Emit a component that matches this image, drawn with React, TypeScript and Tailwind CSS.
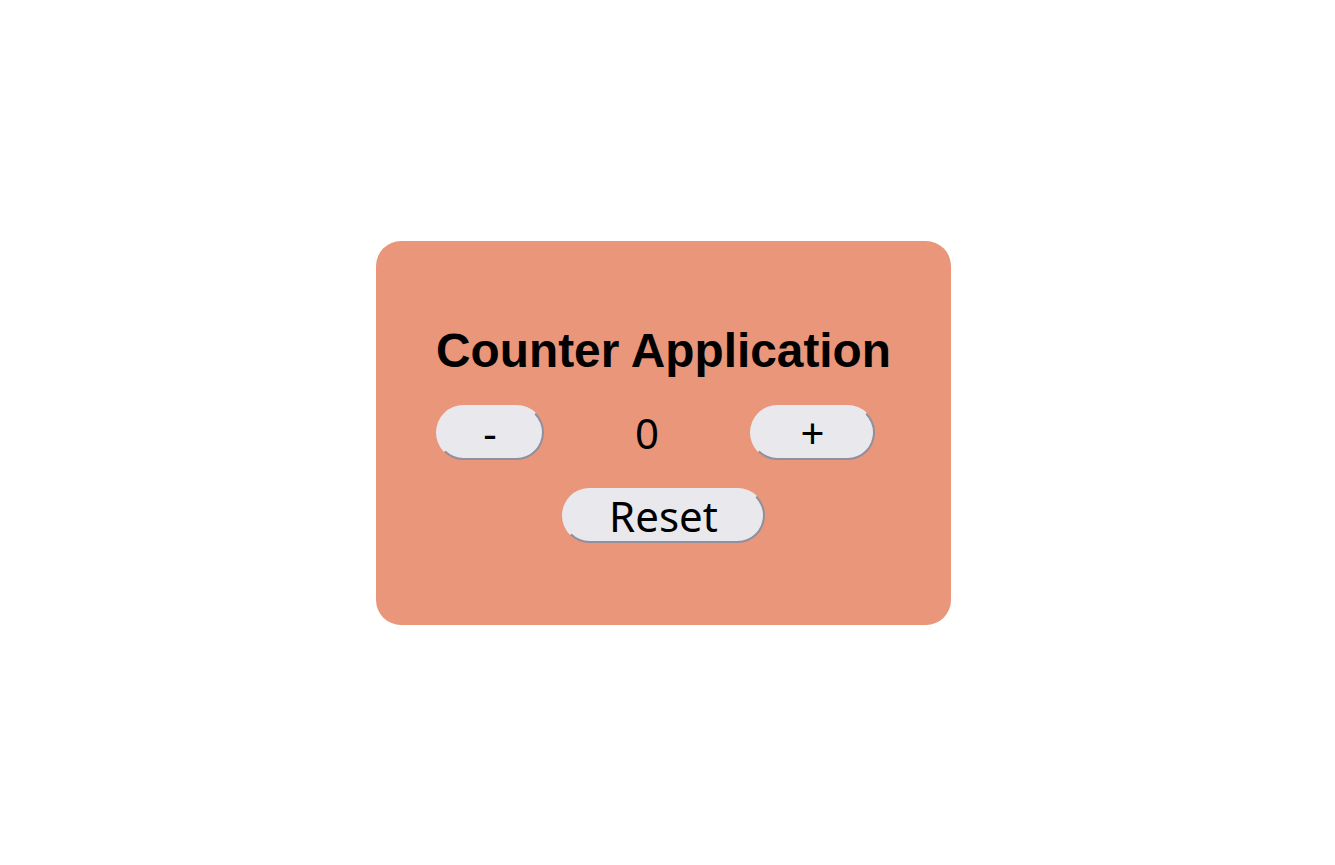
const btn =
  "h-[55px] rounded-full border-2 border-t-[#e9e9ed] border-l-[#e9e9ed] border-b-[#8f8f9d] border-r-[#8f8f9d] bg-[#e9e9ed] text-[42px] leading-[51px] text-black text-center";

export default function App() {
  return (
    <div className="flex h-screen w-full items-center justify-center bg-white pr-[8px]">
      <div className="flex flex-col rounded-[25px] bg-[#e9967a] px-[60px] pt-[82px] pb-[82px]">
        <h1 className="font-['Liberation_Sans',Arial,sans-serif] text-[47.8px] font-bold leading-[55px] text-black">
          Counter Application
        </h1>
        <div className="mt-[27px] flex items-center gap-[91px] font-['Noto_Sans',sans-serif]">
          <button className={`${btn} w-[108px]`}>-</button>
          <span className="text-[42px] leading-[55px] text-black">0</span>
          <button className={`${btn} w-[125px]`}>+</button>
        </div>
        <div className="mt-[28px] flex justify-center font-['Noto_Sans',sans-serif]">
          <button className={`${btn} w-[203px]`}>Reset</button>
        </div>
      </div>
    </div>
  );
}
